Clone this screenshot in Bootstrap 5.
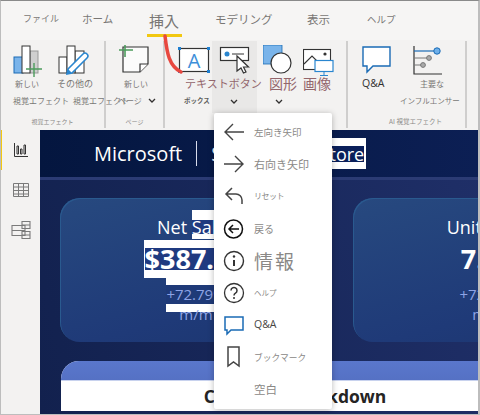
<!DOCTYPE html>
<html lang="ja">
<head>
    <meta charset="UTF-8">
    <title>Power BI 挿入リボン</title>
    <link href="https://cdn.jsdelivr.net/npm/bootstrap@5.3.0/dist/css/bootstrap.min.css" rel="stylesheet">
    <style>
        html, body { height: 415px; overflow: hidden; }
        body { font-family: "Noto Sans CJK JP", "Noto Sans", sans-serif; background: #f3f2f1; color: #797775; }
        .app-frame { width: 480px; height: 415px; border-top: 1px solid #8a8a8a; border-left: 1px solid #bdbdbd; border-right: 2px solid #bdbdbd; border-bottom: 1px solid #bdbdbd; }

        /* tabs */
        .tab-strip { height: 39px; background: #f6f5f4; }
        .tab-item { position: absolute; top: 0; line-height: 36px; white-space: nowrap; }
        .tab-file { left: 22px; font-size: 9px; }
        .tab-home { left: 81px; font-size: 10.5px; }
        .tab-insert { left: 146px; font-size: 15px; border-bottom: 3px solid #f2c811; padding: 0 3px 0 2px; line-height: 39px; height: 36px; }
        .tab-model { left: 214px; font-size: 11.5px; }
        .tab-view { left: 306px; font-size: 11.5px; }
        .tab-help { left: 366px; font-size: 9.5px; }

        /* ribbon */
        .ribbon-bar { height: 90px; background: #f3f2f1; }
        .rb-group { border-right: 2px solid #cfcecd; margin: 1px 0 2px; height: 87px; }
        .rb-g1 { width: 105px; }
        .rb-g2 { width: 59px; }
        .rb-g3 { width: 183px; }
        .rb-g4 { width: 119px; }
        .rb-btns { height: 72px; }
        .rb-btn { white-space: nowrap; padding-top: 4px; }
        .rb-btn svg { display: block; }
        .rb-btn > svg:first-child { margin-bottom: -2px; }
        .rb-on { background: #e9e8e7; }
        .rb-line { height: 17px; line-height: 17px; font-size: 8px; display: block; }
        .rb-other { font-size: 9px; }
        .rb-influ { font-size: 7.5px; }
        .rb-grp-name { font-size: 6px; line-height: 17px; text-align: center; color: #8a8886; white-space: nowrap; }
        .rb-grp-ai { font-size: 6.5px; padding-left: 18px; }
        .w-b1 { width: 50px; } .w-b2 { width: 54px; } .w-b3 { width: 57px; }
        .w-tb { width: 47px; } .w-bt { width: 45px; } .w-sh { width: 43px; } .w-im { width: 46px; }
        .w-qa { width: 52px; } .w-in { width: 65px; }
        .o3 { margin-left: 3px; } .o5 { margin-left: 5px; } .o6 { margin-left: 6px; } .o7 { margin-left: 7px; }
        .o12 { margin-left: 12px; } .o13 { margin-left: 13px; } .o14 { margin-left: 14px; } .o18 { margin-left: 18px; }
        .o19 { margin-left: 19px; } .o20 { margin-left: 20px; } .o22 { margin-left: 22px; }
        .rb-pink { color: #93666c; font-size: 14px; position: relative; z-index: 1; }
        .rb-pink-wide { font-size: 11px; }
        .rb-tiny { font-size: 6.5px; font-weight: 700; color: #605e5c; }
        .rb-dark { color: #323130; font-size: 10.5px; font-family: "Open Sans", sans-serif; }
        .rb-chev { display: block; margin-top: 7px; }
        .rb-chev-in { margin: 0 0 0 6px; }

        /* side + canvas */
        .work-area { height: 284px; }
        .side-rail { width: 39px; background: #f3f2f1; }
        .rail-item { height: 40px; border-left: 1px solid transparent; }
        .rail-on { border-left-color: #f2c811; }
        .report-canvas { width: 438px; overflow: hidden; background: linear-gradient(75deg, #12214e, #1f2f68); font-family: "Open Sans", sans-serif; }
        .report-head { height: 50px; padding-left: 54px; border-bottom: 3px solid #2b3b74; background: linear-gradient(90deg, #04163f, #0c1f54); color: #fff; font-size: 20px; white-space: nowrap; }
        .head-sep { width: 1px; height: 25px; background: #d8dcec; margin: 0 14px; }
        .head-name { word-spacing: 32px; }
        .head-sel { font-size: 18px; background: #0a1f5a; box-shadow: 0 -8px 0 #fff, 0 7px 0 #fff, 2px -8px 0 #fff, 2px 7px 0 #fff, 2px 0 0 #fff; line-height: 16px; display: inline-block; word-spacing: 0; }
        .kpi-row { padding: 18px 0 0 20px; gap: 21px; }
        .kpi-tile { flex: 0 0 272px; height: 144px; border-radius: 20px; text-align: center; color: #fff; background: linear-gradient(165deg, #27497f, #1f3a78 70%, #1c3670); box-shadow: inset 1px 1px 0 #2a5a8f; padding-top: 16px; }
        .kpi-name { font-size: 18px; line-height: 26px; }
        .kpi-val { font-size: 27px; font-weight: 700; line-height: 36px; margin-top: 1px; }
        .kpi-delta { font-size: 15px; line-height: 20px; color: #8ea4e6; margin-top: 7px; }
        .kpi-unit { font-size: 15px; line-height: 20px; color: #8ea4e6; }
        .sel-a, .sel-b, .sel-c { display: inline-block; }
        .sel-a { line-height: 14px; background: #1f3a80; box-shadow: 0 -10px 0 #fff, 0 5px 0 #fff; }
        .sel-b { line-height: 22px; background: #1f3a80; box-shadow: 0 -8px 0 #fff, 0 8px 0 #fff, -1px -8px 0 #fff, -1px 8px 0 #fff, -1px 0 0 #fff; }
        .sel-c { line-height: 19px; background: #1f3a78; box-shadow: 0 -8px 0 #fff, 0 8px 0 #fff; }
        .break-tile { width: 468px; margin: 19px 0 0 21px; border-radius: 18px 18px 0 0; background: #fff; overflow: hidden; }
        .break-top { height: 20px; background: linear-gradient(180deg, #5a77cc, #5571c4); border-bottom: 1px solid #c8d2ee; }
        .break-title { font-size: 17.5px; font-weight: 700; line-height: 30px; color: #252423; text-align: center; white-space: nowrap; }

        /* dropdown from the button */
        .btn-menu.dropdown-menu { left: 213px; top: 112px; width: 118px; height: 296px; padding: 3px 0 0; border: 0; border-radius: 2px; box-shadow: 0 1px 6px rgba(0,0,0,.28); min-width: 0; }
        .btn-menu .dropdown-item { height: 32.2px; padding: 0 0 0 9px; gap: 9px; color: #8a8886; white-space: nowrap; }
        .mi-icon { flex: 0 0 22px; display: block; }
        .t-a { font-size: 9.5px; } .t-b { font-size: 11px; } .t-c { font-size: 8px; letter-spacing: -.5px; }
        .t-d { font-size: 10px; } .t-e { font-size: 19px; letter-spacing: 2px; } .t-f { font-size: 7.5px; }
        .t-g { font-size: 10.5px; color: #484644; font-family: "Open Sans", sans-serif; } .t-h { font-size: 8.7px; } .t-i { font-size: 11.5px; }

        .red-mark { position: absolute; left: 160px; top: 32px; z-index: 2; }
    </style>
</head>
<body>
    <div class="app-frame position-relative overflow-hidden d-flex flex-column">
        <div class="tab-strip position-relative">
            <span class="tab-item tab-file">ファイル</span>
            <span class="tab-item tab-home">ホーム</span>
            <span class="tab-item tab-insert">挿入</span>
            <span class="tab-item tab-model">モデリング</span>
            <span class="tab-item tab-view">表示</span>
            <span class="tab-item tab-help">ヘルプ</span>
        </div>

        <div class="ribbon-bar d-flex">
            <div class="rb-group rb-g1">
                <div class="rb-btns d-flex">
                    <div class="rb-btn w-b1">
                        <svg class="o12" width="32" height="32" viewBox="0 0 32 32" fill="none">
                            <rect x="1" y="12" width="9" height="16" fill="#7ab4ea" stroke="#1a6bb5"/>
                            <rect x="17" y="6" width="8" height="22" fill="#cfcfcf" stroke="#999"/>
                            <rect x="9" y="1" width="8" height="27" fill="#fff" stroke="#333"/>
                            <path d="M21 19v15M13 25h16" stroke="#4c9c5c" stroke-width="1.4" transform="translate(0 -1)"/>
                        </svg>
                        <span class="rb-line o14">新しい</span>
                        <span class="rb-line o12">視覚エフェクト</span>
                    </div>
                    <div class="rb-btn w-b2">
                        <svg class="o7" width="32" height="32" viewBox="0 0 32 32" fill="none">
                            <rect x="1" y="12" width="8" height="16" fill="#fff" stroke="#333"/>
                            <rect x="17" y="6" width="9" height="22" fill="#fff" stroke="#333"/>
                            <rect x="9" y="1" width="8" height="27" fill="#fff" stroke="#333"/>
                            <path d="M10 24 25 9a2.500 2.500 0 0 1 4 4L14 28l-5 1z" fill="#fff" stroke="#2a86cf" stroke-width="1.6"/>
                            <path d="M9 29l1-5 4 4z" fill="#2a86cf"/>
                        </svg>
                        <span class="rb-line rb-other o6">その他の</span>
                        <span class="rb-line o22">視覚エフェクト</span>
                    </div>
                </div>
                <div class="rb-grp-name">視覚エフェクト</div>
            </div>
            <div class="rb-group rb-g2">
                <div class="rb-btns d-flex">
                    <div class="rb-btn w-b3">
                        <svg class="o13" width="32" height="32" viewBox="0 0 32 32" fill="none">
                            <path d="M4 2h25v17l-8 8H4z" fill="#fbfbfb" stroke="#333" stroke-width="1.2"/>
                            <path d="M21 27v-8h8" fill="#fff" stroke="#333" stroke-width="1.2"/>
                            <path d="M6 -1v13M0 5h14" stroke="#4c9c5c" stroke-width="1.6"/>
                        </svg>
                        <span class="rb-line o18">新しい</span>
                        <span class="rb-line d-flex align-items-center o12">ページ<svg class="rb-chev-in" width="8" height="5" viewBox="0 0 8 5" fill="none"><path d="M1 1l3 3 3-3" stroke="#323130" stroke-width="1.3"/></svg></span>
                    </div>
                </div>
                <div class="rb-grp-name">ページ</div>
            </div>
            <div class="rb-group rb-g3">
                <div class="rb-btns d-flex">
                    <div class="rb-btn w-tb">
                        <svg class="o13" width="32" height="32" viewBox="0 0 32 32" fill="none">
                            <rect x="1.500" y="3.500" width="29" height="23" fill="#fff" stroke="#333" stroke-width="1.2"/>
                            <text x="16" y="23" font-size="20" text-anchor="middle" fill="#3d8fd9" font-family="Open Sans, sans-serif">A</text>
                            <path d="M0 2h3v3H0zM29 2h3v3h-3zM0 25h3v3H0zM29 25h3v3h-3z" fill="#1f7fd0"/>
                        </svg>
                        <span class="rb-line rb-pink rb-pink-wide o20">テキストボタン</span>
                        <span class="rb-line rb-tiny o19">ボックス</span>
                    </div>
                    <div class="rb-btn w-bt rb-on">
                        <svg class="o7" width="32" height="32" viewBox="0 0 32 32" fill="none">
                            <rect x="1.500" y="2.500" width="28" height="13" fill="#fff" stroke="#333" stroke-width="1.2"/>
                            <circle cx="8" cy="9" r="2.500" fill="#2a86cf"/>
                            <path d="M13 9h12" stroke="#333"/>
                            <path d="M18 11v15l4-3 2.500 5 2.500-1-2.500-5h5z" fill="#fff" stroke="#333" stroke-width="1.2"/>
                        </svg>
                        <span class="rb-line">&nbsp;</span>
                        <svg class="rb-chev o18" width="8" height="5" viewBox="0 0 8 5" fill="none"><path d="M1 1l3 3 3-3" stroke="#323130" stroke-width="1.3"/></svg>
                    </div>
                    <div class="rb-btn w-sh">
                        <svg class="o6" width="30" height="32" viewBox="0 0 30 32" fill="none">
                            <rect y="0" width="19" height="19" fill="#7ab4ea" stroke="#1a6bb5" stroke-width=".8"/>
                            <circle cx="18" cy="18" r="10" fill="#fff" stroke="#333" stroke-width="1.2"/>
                        </svg>
                        <span class="rb-line rb-pink o12">図形</span>
                        <svg class="rb-chev o18" width="8" height="5" viewBox="0 0 8 5" fill="none"><path d="M1 1l3 3 3-3" stroke="#323130" stroke-width="1.3"/></svg>
                    </div>
                    <div class="rb-btn w-im">
                        <svg class="o3" width="32" height="32" viewBox="0 0 32 32" fill="none">
                            <rect x=".5" y="4.500" width="27" height="20" fill="#fff" stroke="#333" stroke-width="1.1"/>
                            <path d="M1 19l8-8 6 6" stroke="#333" stroke-width="1.1"/>
                            <circle cx="22" cy="9" r="1.600" fill="#333"/>
                            <rect x="12" y="15.500" width="18" height="11" fill="#fff" stroke="#2a86cf" stroke-width="1.2"/>
                            <path d="M21 27v3M17 30.500h8" stroke="#2a86cf"/>
                        </svg>
                        <span class="rb-line rb-pink o3">画像</span>
                    </div>
                </div>
                <div class="rb-grp-name">&nbsp;</div>
            </div>
            <div class="rb-group rb-g4">
                <div class="rb-btns d-flex">
                    <div class="rb-btn w-qa">
                        <svg class="o14" width="30" height="32" viewBox="0 0 30 32" fill="none">
                            <path d="M1 2h27v19H11l-6 6v-6H1z" fill="#fff" stroke="#1a6bb5" stroke-width="1.4"/>
                        </svg>
                        <span class="rb-line rb-dark o14">Q&amp;A</span>
                    </div>
                    <div class="rb-btn w-in">
                        <svg class="o13" width="32" height="32" viewBox="0 0 32 32" fill="none">
                            <path d="M1 1v28h28" stroke="#333" stroke-width="1.2"/>
                            <path d="M1 6h22" stroke="#1a6bb5" stroke-width="1.2"/>
                            <path d="M1 13h15M1 20h9" stroke="#777"/>
                            <circle cx="24" cy="6" r="3.200" fill="#6fb0ea" stroke="#1a6bb5"/>
                            <circle cx="16" cy="13" r="2.400" fill="#aaa" stroke="#777"/>
                            <circle cx="10" cy="20" r="2.400" fill="#aaa" stroke="#777"/>
                        </svg>
                        <span class="rb-line o20">主要な</span>
                        <span class="rb-line rb-influ">インフルエンサー</span>
                    </div>
                </div>
                <div class="rb-grp-name rb-grp-ai">AI 視覚エフェクト</div>
            </div>
        </div>

        <div class="work-area d-flex">
            <div class="side-rail">
                <div class="rail-item rail-on d-flex align-items-center justify-content-center">
                    <svg width="16" height="16" viewBox="0 0 16 16" fill="none" stroke="#333" stroke-width="1"><path d="M1.500 1v13.500H15M4 4h1.500v8H4zM7.500 7H9v5H7.500zM11 3h1.500v9H11z"/></svg>
                </div>
                <div class="rail-item d-flex align-items-center justify-content-center">
                    <svg width="18" height="16" viewBox="0 0 18 16" fill="none" stroke="#7a7a7a"><path d="M1.500 1.500h15v13h-15zM1.500 5h15M1.500 8.500h15M1.500 12h15M6.500 1.500v13M11.500 1.500v13"/></svg>
                </div>
                <div class="rail-item d-flex align-items-center justify-content-center">
                    <svg width="20" height="20" viewBox="0 0 20 20" fill="none" stroke="#7a7a7a" stroke-width="1.1"><path d="M1 5.500h13v10H1zM1 10.500h13M11 1.500h8v7h-8zM11 5h8M11 11.500h8v7h-8zM11 15h8"/></svg>
                </div>
            </div>
            <div class="report-canvas">
                <div class="report-head d-flex align-items-center">
                    <span>Microsoft</span><span class="head-sep"></span><span class="head-name">Surface S<span class="head-sel">tore</span></span>
                </div>
                <div class="kpi-row d-flex">
                    <div class="kpi-tile">
                        <div class="kpi-name">Net <span class="sel-a">Sales</span></div>
                        <div class="kpi-val"><span class="sel-b">$387.7K</span></div>
                        <div class="kpi-delta"><span class="sel-c">+72.79%</span></div>
                        <div class="kpi-unit">m/m</div>
                    </div>
                    <div class="kpi-tile">
                        <div class="kpi-name">Units Sold</div>
                        <div class="kpi-val">7.1K</div>
                        <div class="kpi-delta">+72.79%</div>
                        <div class="kpi-unit">m/m</div>
                    </div>
                </div>
                <div class="break-tile">
                    <div class="break-top"></div>
                    <div class="break-title">Category Breakdown</div>
                </div>
            </div>
        </div>

        <ul class="dropdown-menu show btn-menu">
            <li><a class="dropdown-item d-flex align-items-center" href="#">
                <svg class="mi-icon" width="22" height="22" viewBox="0 0 22 22" fill="none" stroke="#444" stroke-width="1.4"><path d="M21 11H2M10 3l-8 8 8 8"/></svg>
                <span class="t-a">左向き矢印</span></a></li>
            <li><a class="dropdown-item d-flex align-items-center" href="#">
                <svg class="mi-icon" width="22" height="22" viewBox="0 0 22 22" fill="none" stroke="#444" stroke-width="1.4"><path d="M1 11h19M12 3l8 8-8 8"/></svg>
                <span class="t-b">右向き矢印</span></a></li>
            <li><a class="dropdown-item d-flex align-items-center" href="#">
                <svg class="mi-icon" width="22" height="22" viewBox="0 0 22 22" fill="none" stroke="#444" stroke-width="1.5"><path d="M9 3 3 9l6 6M3 9h10a6 6 0 0 1 6 6v4"/></svg>
                <span class="t-c">リセット</span></a></li>
            <li><a class="dropdown-item d-flex align-items-center" href="#">
                <svg class="mi-icon" width="22" height="22" viewBox="0 0 22 22" fill="none" stroke="#111" stroke-width="1.5"><circle cx="10.500" cy="11" r="9"/><path d="M16 11H6M10 7l-4 4 4 4"/></svg>
                <span class="t-d">戻る</span></a></li>
            <li><a class="dropdown-item d-flex align-items-center" href="#">
                <svg class="mi-icon" width="22" height="22" viewBox="0 0 22 22" fill="none" stroke="#333" stroke-width="1.4"><circle cx="11" cy="11" r="9.500"/><path d="M11 10v6" stroke-width="2"/><circle cx="11" cy="6.500" r="1.200" fill="#333" stroke="none"/></svg>
                <span class="t-e">情報</span></a></li>
            <li><a class="dropdown-item d-flex align-items-center" href="#">
                <svg class="mi-icon" width="22" height="22" viewBox="0 0 22 22" fill="none" stroke="#333" stroke-width="1.3"><circle cx="11" cy="11" r="9.500"/><path d="M8 8.500a3 3 0 1 1 4.500 2.600c-1 .6-1.500 1.100-1.500 2.400" stroke-width="1.500"/><circle cx="11" cy="16" r="1" fill="#333" stroke="none"/></svg>
                <span class="t-f">ヘルプ</span></a></li>
            <li><a class="dropdown-item d-flex align-items-center" href="#">
                <svg class="mi-icon" width="22" height="22" viewBox="0 0 22 22" fill="none" stroke="#1a6bb5" stroke-width="1.500"><path d="M2 3h18v13H8l-4 4v-4H2z"/></svg>
                <span class="t-g">Q&amp;A</span></a></li>
            <li><a class="dropdown-item d-flex align-items-center" href="#">
                <svg class="mi-icon" width="22" height="22" viewBox="0 0 22 22" fill="none" stroke="#444" stroke-width="1.500"><path d="M5 1h11v19l-5.500-4L5 20z"/></svg>
                <span class="t-h">ブックマーク</span></a></li>
            <li><a class="dropdown-item d-flex align-items-center" href="#">
                <span class="mi-icon"></span>
                <span class="t-i">空白</span></a></li>
        </ul>

        <svg class="red-mark" width="26" height="44" viewBox="0 0 26 44" fill="none">
            <path d="M4 3C6 20 8 33 20 39" stroke="#e8483f" stroke-width="3.500" stroke-linecap="round"/>
        </svg>
    </div>
    <script src="https://cdn.jsdelivr.net/npm/bootstrap@5.3.0/dist/js/bootstrap.bundle.min.js"></script>
</body>
</html>
